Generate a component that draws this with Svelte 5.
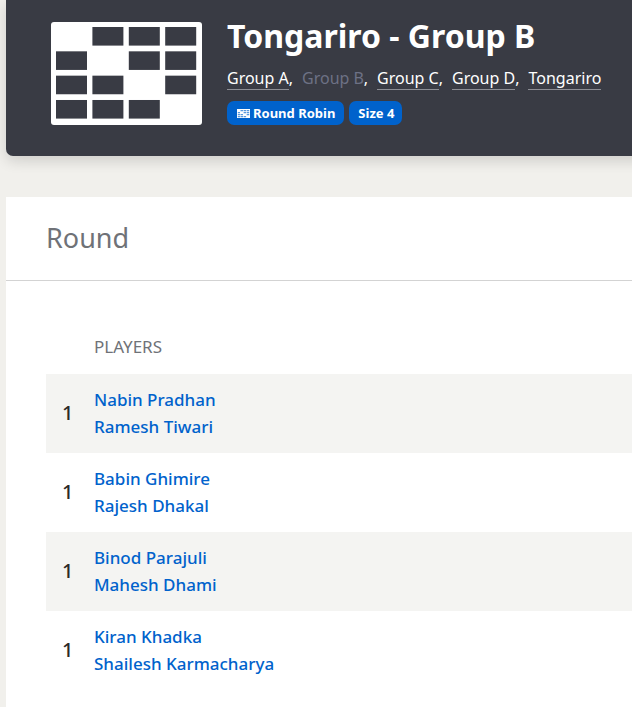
<script>
  const links = [
    { label: 'Group A', current: false },
    { label: 'Group B', current: true },
    { label: 'Group C', current: false },
    { label: 'Group D', current: false },
    { label: 'Tongariro', current: false }
  ];
  const matches = [
    ['Nabin Pradhan', 'Ramesh Tiwari'],
    ['Babin Ghimire', 'Rajesh Dhakal'],
    ['Binod Parajuli', 'Mahesh Dhami'],
    ['Kiran Khadka', 'Shailesh Karmacharya']
  ];
  // 4x4 results grid: the diagonal cells are left blank
  const cells = [];
  for (let r = 0; r < 4; r++) {
    for (let c = 0; c < 4; c++) {
      if (r !== c) cells.push({ x: 5 + c * 36.4, y: 5 + r * 24.33 });
    }
  }
</script>

<div class="page">
  <header class="hero">
    <svg class="logo" viewBox="0 0 151 103" width="151" height="103" aria-hidden="true">
      <rect width="151" height="103" rx="3" fill="#fff" />
      {#each cells as cell}
        <rect x={cell.x} y={cell.y} width="31" height="18.6" fill="#393b44" />
      {/each}
    </svg>
    <div class="info">
      <h1>Tongariro - Group B</h1>
      <div class="links">
        {#each links as link, i}
          <span class="item">
            {#if link.current}
              <span class="current">{link.label}</span>
            {:else}
              <a href="#top">{link.label}</a>
            {/if}{#if i < links.length - 1}<span class="comma">,</span>{/if}
          </span>
        {/each}
      </div>
      <div class="badges">
        <span class="badge">
          <svg viewBox="0 0 13 9" width="13" height="9" aria-hidden="true">
            <path fill="#fff" d="M0 0h13v9H0z" />
            <path fill="#0062cc" fill-opacity="0.65" d="M3.5 1h2.5v1.2H3.5zM6.6 1h2.5v1.2H6.6zM9.7 1h2.5v1.2H9.7zM.8 3h2.2v1.2H.8zM6.6 3h2.5v1.2H6.6zM9.7 3h2.5v1.2H9.7zM.8 5h2.2v1.2H.8zM3.5 5h2.5v1.2H3.5zM9.7 5h2.5v1.2H9.7zM.8 7h2.2v1.2H.8zM3.5 7h2.5v1.2H3.5zM6.6 7h2.5v1.2H6.6z" />
          </svg>
          Round Robin
        </span>
        <span class="badge">Size 4</span>
      </div>
    </div>
  </header>

  <section class="card">
    <h2>Round</h2>
    <div class="body">
      <div class="head">Players</div>
      {#each matches as players}
        <div class="row">
          <div class="num">1</div>
          <div class="players">
            {#each players as name}
              <a href="#top">{name}</a>
            {/each}
          </div>
        </div>
      {/each}
    </div>
  </section>
</div>

<style>
  :global(body) {
    background: #f1f0ec;
    font-family: "Noto Sans", "Open Sans", sans-serif;
    overflow: hidden;
  }
  .page {
    width: 632px;
    height: 707px;
    padding-left: 6px;
    box-sizing: border-box;
    overflow: hidden;
  }
  .hero {
    display: flex;
    gap: 25px;
    width: 700px;
    height: 156px;
    padding: 22px 0 0 45px;
    box-sizing: border-box;
    background: #393b44;
    border-bottom-left-radius: 7px;
    box-shadow: 0 5px 14px rgba(0, 0, 0, 0.14);
  }
  .logo {
    flex-shrink: 0;
  }
  h1 {
    margin: -8px 0 0;
    font-size: 32px;
    line-height: 44px;
    font-weight: 700;
    color: #fff;
  }
  .links {
    display: flex;
    gap: 9px;
    margin-top: 8px;
    height: 35px;
    font-size: 16px;
    line-height: 24px;
    color: #fff;
  }
  .links a {
    color: #fff;
    text-decoration: none;
    border-bottom: 1px solid #8d8e95;
    display: inline-block;
    height: 23px;
    line-height: 24px;
  }
  .current {
    color: #6d7185;
  }
  .badges {
    display: flex;
    gap: 5px;
  }
  .badge {
    display: flex;
    align-items: center;
    gap: 3px;
    height: 24px;
    padding: 0 8px 0 10px;
    border-radius: 7px;
    background: #0062cc;
    color: #fff;
    font-size: 13px;
    font-weight: 700;
    line-height: 24px;
  }
  .badge:first-child {
    padding-right: 9px;
  }
  .badge:last-child {
    padding: 0 8px 0 9px;
  }
  .card {
    margin-top: 41px;
    width: 700px;
    height: 600px;
    background: #fff;
  }
  h2 {
    margin: 0;
    height: 84px;
    padding: 0 0 0 40px;
    box-sizing: border-box;
    border-bottom: 1px solid #d3d3d3;
    font-size: 27px;
    font-weight: 400;
    line-height: 82px;
    color: #6f7277;
  }
  .body {
    padding: 49px 0 0 40px;
  }
  .head {
    height: 44px;
    padding-left: 48px;
    font-size: 17px;
    line-height: 34px;
    color: #6f7277;
    text-transform: uppercase;
  }
  .row {
    display: flex;
    align-items: center;
    height: 79px;
    padding-bottom: 2px;
    box-sizing: border-box;
  }
  .row:nth-child(even) {
    background: #f4f4f2;
  }
  .num {
    width: 48px;
    padding-left: 16px;
    box-sizing: border-box;
    font-size: 20px;
    font-weight: 500;
    color: #2b2a28;
  }
  .players {
    display: flex;
    flex-direction: column;
  }
  .players a {
    font-size: 17px;
    font-weight: 500;
    line-height: 27px;
    color: #0062cc;
    text-decoration: none;
  }
</style>
